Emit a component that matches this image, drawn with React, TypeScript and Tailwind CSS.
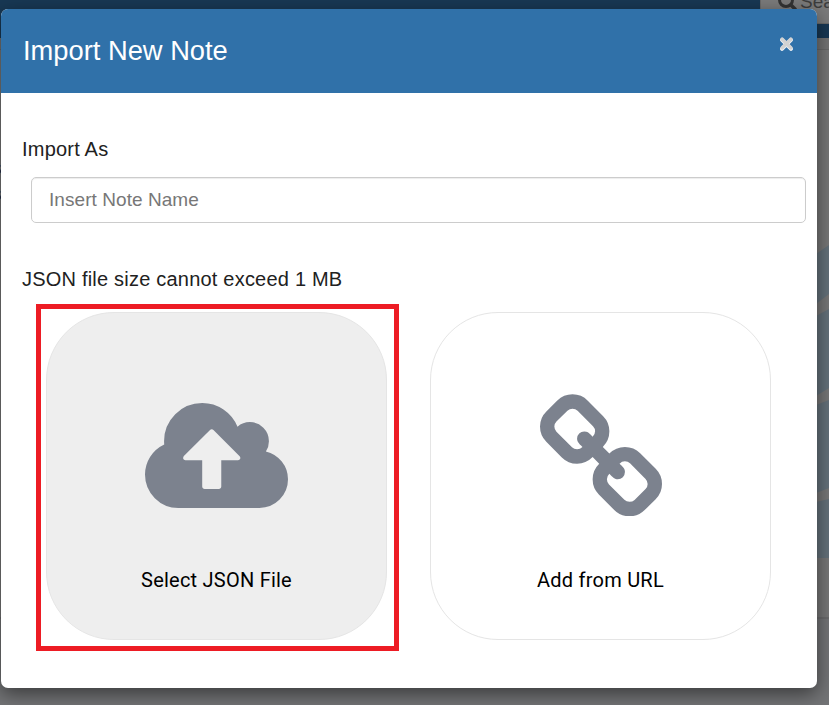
import React from "react";

const arial = "font-['Liberation_Sans',Arial,sans-serif]";

function CloudUpload() {
  return (
    <svg className="h-[105px] w-[143px] fill-[#7c828e]" viewBox="0 128 1920 1408" preserveAspectRatio="none">
      <path d="M1280 864q0-14-9-23l-352-352q-9-9-23-9t-23 9l-351 351q-10 12-10 24 0 14 9 23t23 9h224v352q0 13 9.5 22.5t22.5 9.5h192q13 0 22.5-9.5t9.5-22.5v-352h224q13 0 22.5-9.5t9.5-22.5zm640 288q0 159-112.5 271.5t-271.5 112.5h-1088q-185 0-316.5-131.5t-131.5-316.5q0-130 70-240t188-165q-2-30-2-43 0-212 150-362t362-150q156 0 285.5 87t188.5 231q71-62 166-62 106 0 181 75t75 181q0 76-41 138 130 31 213.5 135.5t83.5 238.5z" />
    </svg>
  );
}

function Chain() {
  return (
    <svg className="h-[122px] w-[122px] fill-[#7c828e]" viewBox="80 12 1632 1632">
      <path d="M1520 1216q0-40-28-68l-208-208q-28-28-68-28-42 0-72 32 3 3 19 18.500t21.500 21.500 15 19 13 25.500 3.500 27.500q0 40-28 68t-68 28q-15 0-27.500-3.500t-25.500-13-19-15-21.500-21.500-18.500-19q-33 31-33 73 0 40 28 68l206 207q27 27 68 27 40 0 68-26l147-146q28-28 28-67zm-703-705q0-40-28-68l-206-207q-28-28-68-28-39 0-68 27l-147 146q-28 28-28 67 0 40 28 68l208 208q27 27 68 27 42 0 72-31-3-3-19-18.500t-21.500-21.500-15-19-13-25.500-3.500-27.500q0-40 28-68t68-28q15 0 27.500 3.500t25.500 13 19 15 21.500 21.500 18.500 19q33-31 33-73zm895 705q0 120-85 203l-147 146q-83 83-203 83-121 0-204-85l-206-207q-83-83-83-203 0-123 88-209l-88-88q-86 88-208 88-120 0-204-84l-208-208q-84-84-84-204t85-203l147-146q83-83 203-83 121 0 204 85l206 207q83 83 83 203 0 123-88 209l88 88q86-88 208-88 120 0 204 84l208 208q84 84 84 204z" />
    </svg>
  );
}

function Backdrop() {
  return (
    <div className="flex h-full flex-col bg-[#777777]">
      <div className="flex h-[38px] shrink-0 justify-end bg-[#183854]">
        <div className="flex h-6 w-[69px] items-start overflow-hidden border-b border-l border-[#6a6a6a] bg-[#7b7b7b] pl-4">
          <svg className="-mt-[9px] h-5 w-5 shrink-0 fill-none stroke-[#333333]" viewBox="0 0 20 20">
            <circle cx="9" cy="9" r="6.500" strokeWidth="3" />
            <path d="M14 14l4 4" strokeWidth="3.500" strokeLinecap="round" />
          </svg>
          <span className="ml-[3px] -mt-[10px] whitespace-nowrap text-[19px] leading-6 text-[#3d3d3d]">Search</span>
        </div>
      </div>
      <div className="h-3 shrink-0 border-b border-[#686868] bg-[#737373]" />
      <div className="flex h-[569px] shrink-0 justify-between border-b-2 border-[#6b6b6c]">
        <div className="mt-[105px] flex w-px flex-col overflow-hidden text-[19px] leading-[26px] text-[#2c1c10]">
          <span className="-ml-[8px]">s</span>
          <span className="-ml-[8px]">s</span>
        </div>
        <svg className="mt-[172px] h-[336px] w-[13px]" viewBox="0 0 13 336">
          <path
            d="M0 32L13 23V72L0 82zM0 94L13 87V166L0 174zM0 183L13 178V266L0 271zM0 280L13 277V336H0z"
            fill="#64717a"
          />
        </svg>
      </div>
      <div className="grow bg-[#737476]" />
    </div>
  );
}

function Tile({ label, active, children }: { label: string; active?: boolean; children: React.ReactNode }) {
  return (
    <button
      className={`flex h-[328px] w-[341px] flex-col items-center rounded-[68px] border border-[#e5e5e5] ${active ? "bg-[#eeeeee]" : "bg-white"}`}
    >
      <span className="flex h-[254px] items-end justify-center">{children}</span>
      <span className="font-['Roboto',sans-serif] text-[20px] leading-[26px] tracking-[0.23px] text-black">{label}</span>
    </button>
  );
}

export default function App() {
  return (
    <div className={`relative h-[705px] w-[829px] overflow-hidden ${arial}`}>
      <Backdrop />
      <div
        role="dialog"
        className="absolute left-px top-[9px] flex h-[679px] w-[816px] flex-col overflow-hidden rounded-[7px] bg-white shadow-[0_6px_19px_rgba(0,0,0,0.5)]"
      >
        <header className="flex h-[84px] shrink-0 justify-between bg-[#3071a9] pl-[22px] pr-[22px] text-white">
          <h1 className="pt-[24px] text-[27.3px] leading-[35px]">Import New Note</h1>
          <button aria-label="Close" className="mt-[27px] h-4 w-4">
            <svg className="h-4 w-4 fill-none" viewBox="0 0 16 16" strokeLinecap="round">
              <path d="M3 3.800L12 12.800M12 3.800L3 12.800" stroke="#f2f4f6" strokeWidth="4" />
              <path d="M3.200 3.200L11.800 11.800M11.800 3.200L3.200 11.800" stroke="#d2d2d2" strokeWidth="3.600" />
            </svg>
          </button>
        </header>
        <main className="flex flex-col text-[20px] leading-[26px] tracking-[0.21px] text-[#212121]">
          <label className="ml-[21px] mt-[43px]">Import As</label>
          <input
            className="ml-[30px] mt-[15px] h-[46px] w-[775px] rounded-[5px] border border-[#cccccc] bg-white pl-[17px] pr-4 text-[19px] tracking-[0.06px] shadow-[inset_0_1px_1px_rgba(0,0,0,0.075)] placeholder:text-[#777777] placeholder:opacity-100"
            placeholder="Insert Note Name"
          />
          <p className="ml-[21px] mt-[43px]">JSON file size cannot exceed 1 MB</p>
          <div className="ml-[35px] mt-[12px] flex items-start">
            <div className="h-[347px] w-[363px] border-[5px] border-[#ed1c24] pl-[5px] pt-[3px]">
              <Tile label="Select JSON File" active>
                <span className="mb-[59px]">
                  <CloudUpload />
                </span>
              </Tile>
            </div>
            <div className="ml-[31px] mt-[8px]">
              <Tile label="Add from URL">
                <span className="mb-[51px]">
                  <Chain />
                </span>
              </Tile>
            </div>
          </div>
        </main>
      </div>
    </div>
  );
}
